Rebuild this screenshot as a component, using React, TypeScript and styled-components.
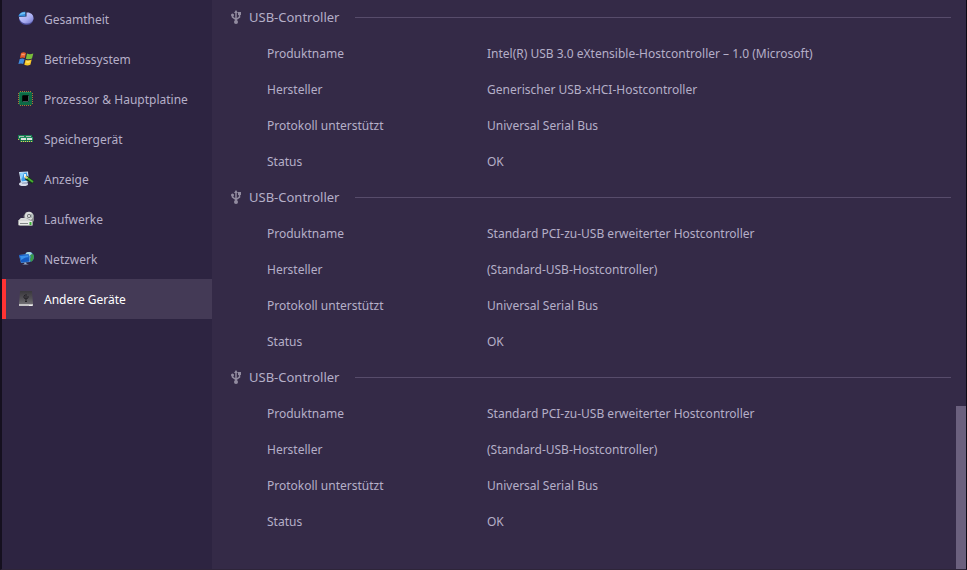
import React from "react";
import styled, { createGlobalStyle } from "styled-components";

const GlobalStyle = createGlobalStyle`
  * { box-sizing: border-box; }
  body {
    margin: 0;
    background: #342a47;
    color: #b5afc8;
    font-family: "Noto Sans", sans-serif;
    font-size: 12px;
    line-height: 16px;
  }
`;

const Window = styled.div`
  display: flex;
  height: 100vh;
  overflow: hidden;
  background: #342a47;
  border-left: 2px solid #15101f;
  border-right: 1px solid #0c0814;
  border-bottom: 1px solid #2e2539;
`;

const Sidebar = styled.nav`
  flex: 0 0 210px;
  background: #2d2441;
`;

const NavList = styled.ul`
  list-style: none;
  margin: -1px 0 0;
  padding: 0;
`;

const NavButton = styled.button<{ $active: boolean }>`
  display: flex;
  align-items: center;
  gap: 10px;
  width: 100%;
  height: 40px;
  padding: 0 12px;
  border: 0;
  border-left: 4px solid ${(p) => (p.$active ? "#ff3333" : "transparent")};
  background: ${(p) => (p.$active ? "#443a56" : "transparent")};
  color: ${(p) => (p.$active ? "#ffffff" : "#b5afc8")};
  font: inherit;
  text-align: left;
  white-space: nowrap;
  cursor: pointer;
  svg { flex: none; }
`;

const NavLabel = styled.span`
  padding-top: 2px;
`;

const Content = styled.main`
  flex: 1;
  min-width: 0;
  overflow: hidden;
  padding: 0 5px 0 19px;
`;

const Sections = styled.div`
  margin-top: -1px;
`;

const SectionHeader = styled.header`
  display: flex;
  align-items: center;
  gap: 8px;
  height: 36px;
`;

const SectionTitle = styled.h2`
  margin: 0;
  font-size: 13px;
  font-weight: 400;
  line-height: 18px;
  color: #b5afc8;
`;

const Rule = styled.div`
  flex: 1;
  height: 1px;
  margin-left: 8px;
  background: #574c6b;
`;

const Details = styled.dl`
  margin: 0;
  padding-left: 36px;
`;

const DetailRow = styled.div`
  display: grid;
  grid-template-columns: 220px 1fr;
  align-items: center;
  height: 36px;
  padding-top: 2px;
`;

const Term = styled.dt``;

const Value = styled.dd`
  margin: 0;
`;

const ScrollTrack = styled.div`
  display: flex;
  flex: 0 0 10px;
  flex-direction: column;
  justify-content: flex-end;
`;

const ScrollThumb = styled.div`
  height: 28.7%;
  background: #6b607e;
`;

const Svg = ({ children }: { children: React.ReactNode }) => (
  <svg width="16" height="16" viewBox="0 0 16 16" aria-hidden="true">
    {children}
  </svg>
);

const PieIcon = () => (
  <Svg>
    <defs>
      <linearGradient id="pie" x1="0" y1="0" x2="1" y2="1">
        <stop offset="0" stopColor="#d6d9ff" />
        <stop offset="0.6" stopColor="#a9adf2" />
        <stop offset="1" stopColor="#6c70c4" />
      </linearGradient>
    </defs>
    <path d="M1 7c0 4 3 7 7.500 7S15.500 11 15.500 7z" fill="#4d4f9c" />
    <path d="M8.500 1.500C12.500 1 15.500 3.500 15.500 7S12.500 12.500 8.500 12.500 1.500 10 1 6l7.500-.5z" fill="url(#pie)" />
    <path d="M.5 5.500C.7 2.500 3.500 .8 7.500 .8v4.700z" fill="#348ddd" />
    <path d="M1.500 4C2.500 2 4.500 1.300 7 1.300V3z" fill="#75c3f5" />
  </Svg>
);

const WindowsIcon = () => (
  <Svg>
    <path d="M3 2c2-1 3.500-.8 5 0L6.800 7c-1.500-.8-3-.8-4.800 0z" fill="#e55b26" />
    <path d="M9 2.600c2 .8 3.800.8 6.300-.2L14 7.600c-2 1-4 1-6.100.1z" fill="#79bd3b" />
    <path d="M1.700 8c1.800-.8 3.300-.7 4.800 0L5.200 13c-1.500-.8-3-.8-4.800 0z" fill="#3e8bdc" />
    <path d="M7.600 8.700c2 .9 4 .8 6.100-.1l-1.300 5.200c-2 .9-4 .9-6.100 0z" fill="#f7c827" />
    <path d="M3.600 3c1.200-.5 2.200-.4 3.300 0l-.4 1.500c-1-.4-2-.4-3.300 0z" fill="#f79a70" />
    <path d="M8.500 10c1.200.4 2.200.4 3.500 0l-.4 1.500c-1.200.3-2.200.3-3.400 0z" fill="#ffe77b" />
  </Svg>
);

const ChipIcon = () => (
  <Svg>
    <path
      d="M2 .5h12M2 14.500h12M.5 2v12M14.500 2v12"
      fill="none"
      stroke="#a77c32"
      strokeDasharray="1 1"
    />
    <rect x="1" y="1" width="13" height="13" rx="1" fill="#0c6a45" />
    <path d="M1.500 13V1.500H13" fill="none" stroke="#1d8259" />
    <path d="M5 4h5l1 1v5l-1 1H5l-1-1V5z" fill="#07120f" />
    <rect x="5" y="5" width="5" height="5" fill="#000" />
    <path d="M5 10.500h5l.5-.5V5" fill="none" stroke="#47535a" />
  </Svg>
);

const MemoryIcon = () => (
  <Svg>
    <path d="M0 4h14v5H0z" fill="#168052" />
    <path d="M1 5h5v2H1zM8 5h5v2H8z" fill="#aebcb5" />
    <path d="M2 6h13v5H2z" fill="#1d8f5d" />
    <path d="M3 7h5v2H3zM9 7h5v2H9z" fill="#dce4df" />
    <path d="M2 9h13v1H2z" fill="#186944" />
    <path d="M3 10.500h12" stroke="#e5c855" strokeDasharray="1 1" />
    <path d="M0 8.500h2" stroke="#d4a74a" strokeDasharray="1 1" />
  </Svg>
);

const DisplayIcon = () => (
  <Svg>
    <ellipse cx="5.500" cy="13" rx="4.500" ry="2" fill="#d6dbe9" />
    <path d="M4 10h5l1 3H4z" fill="#a6b2ca" />
    <path d="M1 1l9-.5 1 10-8 1z" fill="#d5e8f7" />
    <path d="M2 2l7-.4.9 8-6.200.8z" fill="#3b9be6" />
    <path d="M2 2l4-.2L4 7.500l-1 .5z" fill="#8cd3ff" />
    <path d="M6 3h2v2l2 2-1 2-3-3z" fill="#edf3ef" />
    <path d="M8 6.500l7 5" stroke="#143321" strokeWidth="4" />
    <path d="M8 6l7 5" stroke="#47ae2f" strokeWidth="2" />
    <path d="M7 5l3 1-1 2-2-1z" fill="#e8d07c" />
  </Svg>
);

const DriveIcon = () => (
  <Svg>
    <path d="M8 1h5l3 3v6l-3 2H7L5.500 5z" fill="#858789" />
    <circle cx="11" cy="5" r="4.200" fill="#d9dcdb" />
    <path d="M11 5l3.500-2.500v5z" fill="#a1afad" />
    <circle cx="11" cy="5" r="2" fill="#676b6c" />
    <circle cx="11" cy="5" r="1" fill="#f4f4f4" />
    <path d="M3 7h6l6 3v4l-1 1H2l-2-1v-4z" fill="#9a9d9d" />
    <path d="M3 7h5l5 3H0z" fill="#d7d9d8" />
    <path d="M1 10h13v4H1z" fill="#e7e8e7" />
    <path d="M2 12.500h8" stroke="#84898a" />
    <path d="M12.500 11v3" stroke="#3aaf35" strokeWidth="2" />
  </Svg>
);

const NetworkIcon = () => (
  <Svg>
    <circle cx="11" cy="6" r="5" fill="#3c8ccf" />
    <path d="M8 2c2-2 5-.8 6 0l-1 2-2 1-3-1z" fill="#a9d7df" />
    <path d="M12 4l3-1c1.500 3 .8 6-2 8l-1-3 1-2z" fill="#3b9a45" />
    <path d="M1 4l10-1 1 8-9 1z" fill="#6a9fda" />
    <path d="M1 4l9.500-.8.8 7.200-8.200 1z" fill="#155bc2" />
    <path d="M2 5l8-.8.3 2C7 6 5 8 3 9z" fill="#3a91eb" />
    <path d="M7 11l2 2 2 .5H4L6 13z" fill="#9bb1ce" />
  </Svg>
);

const DeviceIcon = () => (
  <Svg>
    <defs>
      <linearGradient id="device" x1="0" y1="0" x2="0" y2="1">
        <stop offset="0" stopColor="#3a383d" />
        <stop offset="0.6" stopColor="#535156" />
        <stop offset="1" stopColor="#6f6d72" />
      </linearGradient>
    </defs>
    <path d="M2 0h12l1 13H1z" fill="url(#device)" />
    <path d="M1 13h14v2H1z" fill="#c4c2c5" />
    <path d="M11 14h3v1h-3z" fill="#f1f1f1" />
    <path d="M8 3v7M6 5v2l2 1 2-1V5M6 4.500h1M7 10.500h2" fill="none" stroke="#252328" />
  </Svg>
);

const UsbIcon = () => (
  <svg width="10" height="14" viewBox="0 0 10 14" aria-hidden="true">
    <path d="M5 2v9M1.500 5v2L5 9.500 8.500 7V3" fill="none" stroke="#918b9f" strokeWidth="1.500" />
    <path d="M5 0l2 3H3z" fill="#918b9f" />
    <circle cx="1.500" cy="5" r="1.500" fill="#918b9f" />
    <path d="M7 2h3v3H7z" fill="#918b9f" />
    <circle cx="5" cy="12" r="2" fill="#918b9f" />
  </svg>
);

const navItems = [
  { label: "Gesamtheit", Icon: PieIcon },
  { label: "Betriebssystem", Icon: WindowsIcon },
  { label: "Prozessor & Hauptplatine", Icon: ChipIcon },
  { label: "Speichergerät", Icon: MemoryIcon },
  { label: "Anzeige", Icon: DisplayIcon },
  { label: "Laufwerke", Icon: DriveIcon },
  { label: "Netzwerk", Icon: NetworkIcon },
  { label: "Andere Geräte", Icon: DeviceIcon },
];

const controllers = [
  {
    name: "Intel(R) USB 3.0 eXtensible-Hostcontroller – 1.0 (Microsoft)",
    vendor: "Generischer USB-xHCI-Hostcontroller",
  },
  {
    name: "Standard PCI-zu-USB erweiterter Hostcontroller",
    vendor: "(Standard-USB-Hostcontroller)",
  },
  {
    name: "Standard PCI-zu-USB erweiterter Hostcontroller",
    vendor: "(Standard-USB-Hostcontroller)",
  },
];

const Detail = ({ label, value }: { label: string; value: string }) => (
  <DetailRow>
    <Term>{label}</Term>
    <Value>{value}</Value>
  </DetailRow>
);

export default function App() {
  const [active, setActive] = React.useState("Andere Geräte");
  return (
    <>
      <GlobalStyle />
      <Window>
        <Sidebar>
          <NavList>
            {navItems.map(({ label, Icon }) => (
              <li key={label}>
                <NavButton
                  type="button"
                  $active={label === active}
                  aria-current={label === active ? "page" : undefined}
                  onClick={() => setActive(label)}
                >
                  <Icon />
                  <NavLabel>{label}</NavLabel>
                </NavButton>
              </li>
            ))}
          </NavList>
        </Sidebar>
        <Content>
          <Sections>
            {controllers.map((controller, index) => (
              <section key={index}>
                <SectionHeader>
                  <UsbIcon />
                  <SectionTitle>USB-Controller</SectionTitle>
                  <Rule />
                </SectionHeader>
                <Details>
                  <Detail label="Produktname" value={controller.name} />
                  <Detail label="Hersteller" value={controller.vendor} />
                  <Detail label="Protokoll unterstützt" value="Universal Serial Bus" />
                  <Detail label="Status" value="OK" />
                </Details>
              </section>
            ))}
          </Sections>
        </Content>
        <ScrollTrack>
          <ScrollThumb />
        </ScrollTrack>
      </Window>
    </>
  );
}
